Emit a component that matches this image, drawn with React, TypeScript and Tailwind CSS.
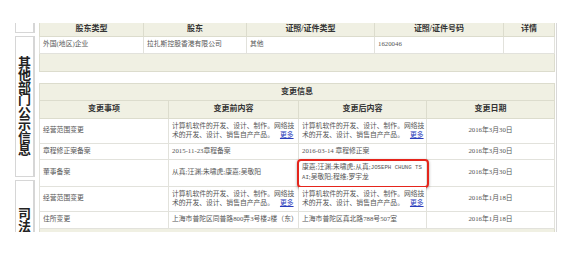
import React from 'react'

const font = "font-['Liberation_Serif','Noto_Sans_CJK_SC',serif]"

function More() {
  return <span className="ml-[6px] text-[#2b3dbb] underline">更多</span>
}

function Latin({ children }: { children: React.ReactNode }) {
  return <span className="font-['Liberation_Mono',monospace] text-[5.7px]">{children}</span>
}

const scope = (
  <>
    计算机软件的开发、设计、制作。网络技
    <br />
    术的开发、设计、销售自产产品。
    <More />
  </>
)

const changes = [
  { item: '经营范围变更', before: scope, after: scope, date: '2016年3月30日', h: 'h-[25px]' },
  { item: '章程修正案备案', before: '2015-11-23章程备案', after: '2016-03-14 章程修正案', date: '2016年3月30日', h: 'h-[16px]' },
  {
    item: '董事备案',
    before: '从真;汪渊;朱啸虎;康嘉;吴敬阳',
    after: (
      <>
        康嘉;汪渊;朱啸虎;从真;<Latin>JOSEPH CHUNG TS</Latin>
        <br />
        <Latin>AI</Latin>;吴敬阳;程维;罗宇龙
      </>
    ),
    date: '2016年3月30日',
    h: 'h-[27px]',
    marked: true,
  },
  { item: '经营范围变更', before: scope, after: scope, date: '2016年1月18日', h: 'h-[25px]' },
  { item: '住所变更', before: '上海市普陀区同普路800弄3号楼2楼（东）', after: '上海市普陀区真北路788号507室', date: '2016年1月18日', h: 'h-[17px]' },
]

const th = 'border border-[#dcdccd] bg-[#f0f0e3] p-0 text-center align-middle text-[8px] leading-[10px] font-bold text-[#333] whitespace-nowrap overflow-hidden'
const td = 'border border-[#e2e2dc] bg-white py-0 px-[3px] align-middle text-[6.8px] leading-[8.5px] text-[#555] whitespace-nowrap'

export default function App() {
  return (
    <div className={`w-[572px] h-[254px] bg-white overflow-hidden ${font}`}>
      <div className="mt-[23px] h-[209px] flex overflow-hidden pl-[15px]">
        <div className="w-[20px] shrink-0 flex flex-col gap-[3px]">
          <div className="h-[10px] shrink-0 border border-[#d6d6d6] border-r-2 border-t-0 bg-white" />
          <div className="h-[141px] shrink-0 border border-[#d6d6d6] border-r-2 bg-white flex items-center justify-center">
            <div className="w-[13px] text-[13px] leading-[12.5px] font-bold text-[#222] break-all text-center">
              其他部门公示信息
            </div>
          </div>
          <div className="h-[140px] shrink-0 border border-[#d6d6d6] border-r-2 bg-white pt-[27px] flex justify-center">
            <div className="w-[13px] text-[13px] leading-[12.5px] font-bold text-[#222] break-all text-center">
              司法协助信息
            </div>
          </div>
        </div>

        <div className="ml-[4px] w-[515px] shrink-0 flex flex-col">
          <table className="w-full table-fixed border-collapse">
            <colgroup>
              <col className="w-[104px]" />
              <col className="w-[103px]" />
              <col className="w-[128px]" />
              <col className="w-[129px]" />
              <col className="w-[51px]" />
            </colgroup>
            <tbody>
              <tr className="h-[13px]">
                <th className={`${th} border-t-0`}>股东类型</th>
                <th className={`${th} border-t-0`}>股东</th>
                <th className={`${th} border-t-0`}>证照/证件类型</th>
                <th className={`${th} border-t-0`}>证照/证件号码</th>
                <th className={`${th} border-t-0`}>详情</th>
              </tr>
              <tr className="h-[17px]">
                <td className={td}>外国(地区)企业</td>
                <td className={td}>拉扎斯控股香港有限公司</td>
                <td className={td}>其他</td>
                <td className={td}>1620046</td>
                <td className={td}></td>
              </tr>
              <tr className="h-[18px]">
                <td colSpan={5} className="border border-[#dcdccd] bg-[#f0f0e3] p-0"></td>
              </tr>
            </tbody>
          </table>

          <table className="mt-[11px] w-full table-fixed border-collapse">
            <colgroup>
              <col className="w-[129px]" />
              <col className="w-[130px]" />
              <col className="w-[128px]" />
              <col className="w-[128px]" />
            </colgroup>
            <tbody>
              <tr className="h-[17px]">
                <th colSpan={4} className={th}>变更信息</th>
              </tr>
              <tr className="h-[18px]">
                <th className={th}>变更事项</th>
                <th className={th}>变更前内容</th>
                <th className={th}>变更后内容</th>
                <th className={th}>变更日期</th>
              </tr>
              {changes.map((c, i) => (
                <tr key={i} className={c.h}>
                  <td className={td}>{c.item}</td>
                  <td className={`${td} overflow-hidden`}>{c.before}</td>
                  <td className={`${td} relative`}>
                    {c.after}
                    {c.marked && (
                      <div className="absolute -left-[2px] -right-[3px] -top-[1px] -bottom-[2px] rounded-[4px] border-[2.5px] border-[#e5251c] shadow-[0_1px_3px_rgba(0,0,0,0.35)]" />
                    )}
                  </td>
                  <td className={`${td} text-center`}>{c.date}</td>
                </tr>
              ))}
              <tr className="h-[12px]">
                <td colSpan={4} className="border border-[#dcdccd] bg-[#f0f0e3] p-0"></td>
              </tr>
            </tbody>
          </table>
        </div>

        <div className="ml-[2px] w-px h-full bg-[#d8d8d8]" />
      </div>
    </div>
  )
}
